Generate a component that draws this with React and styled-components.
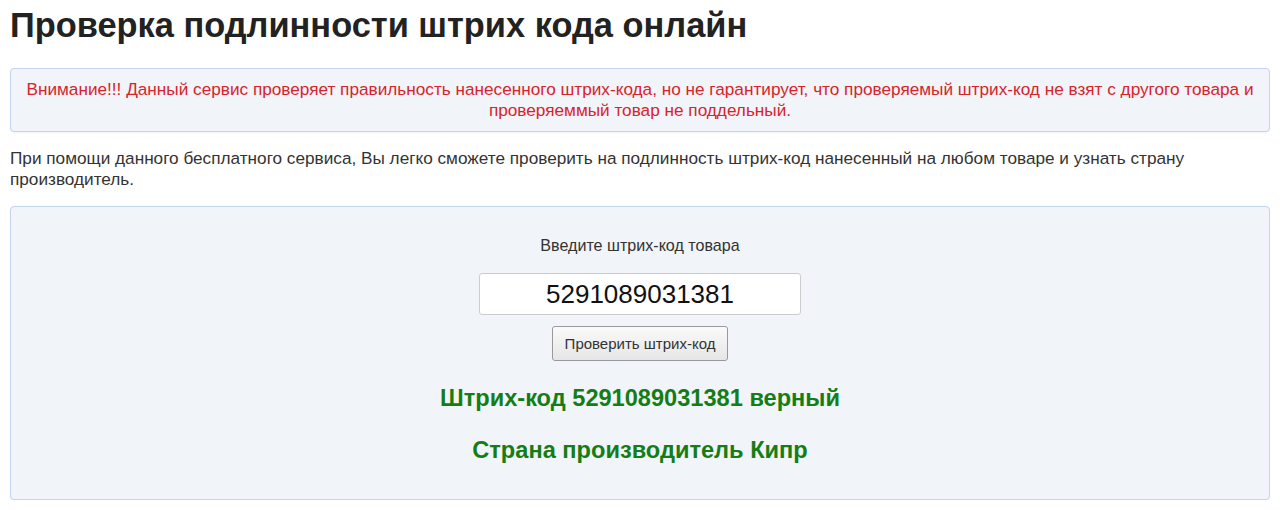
import React, { useState } from 'react';
import styled, { createGlobalStyle } from 'styled-components';

const GlobalStyle = createGlobalStyle`
  body {
    margin: 0;
    background: #fff;
    font-family: 'Liberation Sans', Arial, sans-serif;
    color: #333;
  }
`;

function App() {
  const [code, setCode] = useState('5291089031381');

  return (
    <Page>
      <GlobalStyle />
      <Title>Проверка подлинности штрих кода онлайн</Title>
      <Warning>
        Внимание!!! Данный сервис проверяет правильность нанесенного штрих-кода, но не гарантирует, что
        проверяемый штрих-код не взят с другого товара и проверяеммый товар не поддельный.
      </Warning>
      <Intro>
        При помощи данного бесплатного сервиса, Вы легко сможете проверить на подлинность штрих-код
        нанесенный на любом товаре и узнать страну производитель.
      </Intro>
      <CheckForm onSubmit={e => e.preventDefault()}>
        <Label htmlFor='barcode'>Введите штрих-код товара</Label>
        <CodeInput id='barcode' value={code} onChange={e => setCode(e.target.value)} />
        <SubmitButton type='submit'>Проверить штрих-код</SubmitButton>
        <Result>Штрих-код 5291089031381 верный</Result>
        <Result>Страна производитель Кипр</Result>
      </CheckForm>
    </Page>
  );
}

const Page = styled.div`
  padding: 0 10px;
`;

const Title = styled.h1`
  margin: 0;
  padding: 6px 0 0;
  font-size: 34.4px;
  line-height: 38px;
  font-weight: bold;
  color: #222;
`;

const Warning = styled.div`
  margin-top: 24px;
  padding: 10px 14px;
  border: 1px solid #c3d4ec;
  border-radius: 4px;
  background: #f1f4f8;
  box-shadow: 0 1px 1px rgba(0, 0, 0, 0.05);
  color: #d8232c;
  font-size: 17.2px;
  line-height: 21px;
  text-align: center;
`;

const Intro = styled.p`
  margin: 16px 0 0;
  font-size: 17.2px;
  line-height: 21px;
  color: #333;
`;

const CheckForm = styled.form`
  margin-top: 16px;
  padding: 28px 0 35px;
  border: 1px solid #c3d4ec;
  border-radius: 4px;
  background: #f1f4f8;
  box-shadow: 0 1px 1px rgba(0, 0, 0, 0.05);
  display: flex;
  flex-direction: column;
  align-items: center;
`;

const Label = styled.label`
  font-size: 16.1px;
  line-height: 20px;
  color: #333;
`;

const CodeInput = styled.input`
  margin-top: 18px;
  box-sizing: border-box;
  width: 322px;
  height: 42px;
  border: 1px solid #ccc;
  border-radius: 3px;
  background: #fff;
  font-family: 'Liberation Sans', Arial, sans-serif;
  font-size: 26px;
  color: #111;
  text-align: center;
`;

const SubmitButton = styled.button`
  margin-top: 11px;
  box-sizing: border-box;
  height: 35px;
  padding: 0 12px;
  border: 1px solid #999;
  border-radius: 3px;
  background: linear-gradient(#fafafa, #e6e6e6);
  font-family: 'Liberation Sans', Arial, sans-serif;
  font-size: 15px;
  color: #333;
`;

const Result = styled.div`
  margin-top: 23px;
  font-size: 23.6px;
  line-height: 28px;
  font-weight: bold;
  color: #157d15;

  & + & {
    margin-top: 24px;
  }
`;

export default App;
